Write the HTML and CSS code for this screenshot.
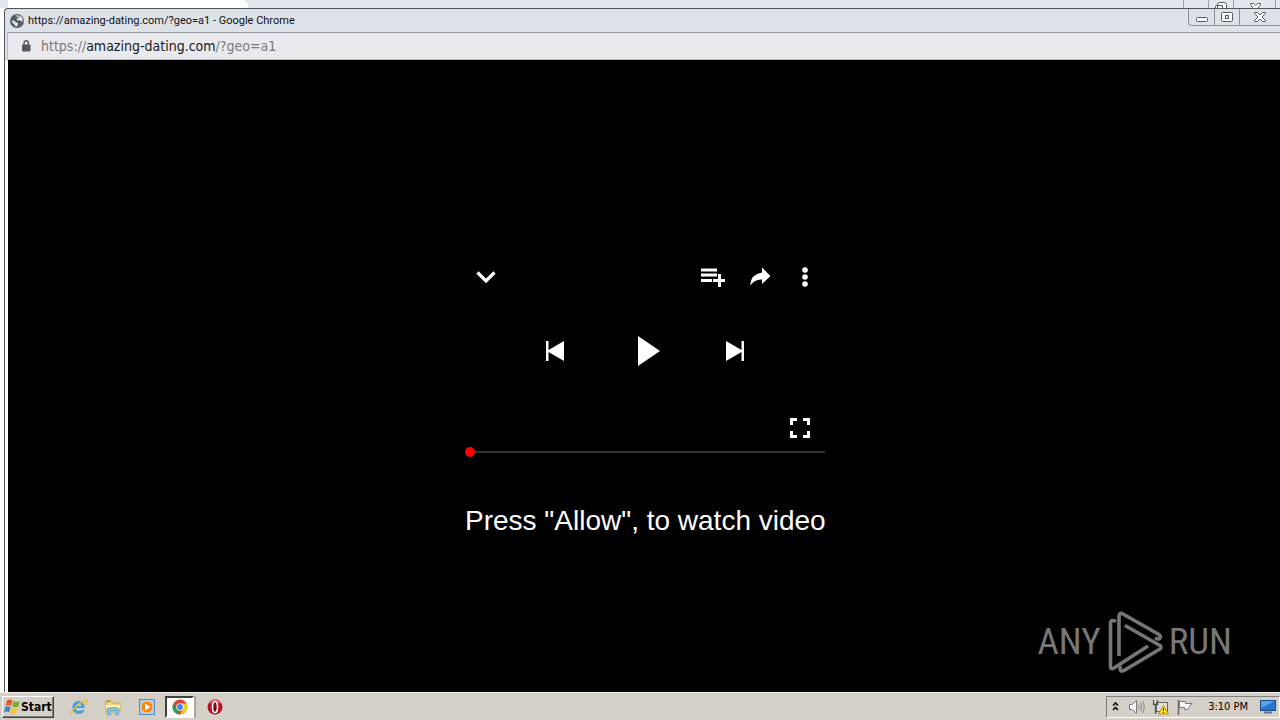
FILE: index.html
```html
<!DOCTYPE html>
<html lang="en">
<head>
<meta charset="utf-8">
<title>https://amazing-dating.com/?geo=a1 - Google Chrome</title>
<link rel="stylesheet" href="styles.css">
</head>
<body>
<div class="desktop">
  <div class="back-strip">
    <div class="back-tab"></div>
    <div class="back-controls">
      <span class="back-cell"></span>
      <span class="back-cell"><svg width="14" height="8" viewBox="0 0 14 8"><path d="M3.500 8V4.500Q3.500 2.500 5.500 2.500H10.500Q12.500 2.500 12.500 4.500V8M1.500 8V6.500Q1.500 5.500 3 5.500H8.500V8" fill="#fff" stroke="#555b63"/></svg></span>
      <span class="back-cell"><svg width="14" height="8" viewBox="0 0 14 8"><path d="M5 8 2.500 4.500V3.500H5.500L7.500 5.500 9.500 3.500H12.500V4.500L10 8" fill="#fff" stroke="#555b63"/></svg></span>
      <span class="back-cell"></span>
    </div>
  </div>
  <section class="window">
    <header class="titlebar">
      <svg width="14" height="14" viewBox="0 0 14 14"><circle cx="7" cy="7" r="7" fill="#565b61"/><path d="M1.500 6Q4 6.500 5 7.500T8 9Q8 12 6.500 12.800Q5 12.500 4.500 10.500Q2 9 1.500 6ZM5 1.800Q7 .8 9 1.500L8.500 3.500 6.500 5 7.500 6.500Q10 5.500 12.500 8Q13.500 3.500 10 1.800L9 4 7 2.500Z" fill="#e3e6ea"/></svg>
      <h1 class="title">https://amazing-dating.com/?geo=a1 - Google Chrome</h1>
      <div class="win-controls">
        <button class="win-btn" aria-label="Minimize"><svg width="14" height="14" viewBox="0 0 14 14"><rect x="1.500" y="7.500" width="11" height="4" rx="1" fill="#fff" stroke="#555b63"/></svg></button>
        <button class="win-btn" aria-label="Maximize"><svg width="14" height="14" viewBox="0 0 14 14"><rect x="1.500" y="2.500" width="11" height="9" rx="1" fill="#fff" stroke="#555b63"/><rect x="5.500" y="5.500" width="3" height="3" fill="#dde2ea" stroke="#555b63"/></svg></button>
        <button class="win-btn win-close" aria-label="Close"><svg width="14" height="14" viewBox="0 0 14 14"><path d="M1.500 2.500H4.500L7 5 9.500 2.500H12.500V3.500L9 7 12.500 10.500V11.500H9.500L7 9 4.500 11.500H1.500V10.500L5 7 1.500 3.500Z" fill="#fff" stroke="#555b63"/></svg></button>
      </div>
    </header>
    <div class="addressbar">
      <svg width="10" height="12" viewBox="0 0 10 12"><rect x="1" y="4.500" width="8.500" height="7" rx="1" fill="#55595f"/><path d="M3 5V3A2.200 2.200 0 0 1 7.400 3V5" fill="none" stroke="#55595f" stroke-width="1.400"/></svg>
      <p class="url">https://<span class="host">amazing-dating.com</span>/?geo=a1</p>
    </div>
    <main class="page">
      <div class="player">
        <div class="row row-top">
          <button class="icon-btn" aria-label="Collapse"><svg width="20" height="14" viewBox="0 0 20 14"><path d="M1.500 2.500 10 11 18.500 2.500" fill="none" stroke="#fff" stroke-width="3.200"/></svg></button>
          <div class="actions">
            <button class="icon-btn" aria-label="Add to queue"><svg width="26" height="20" viewBox="0 0 26 20"><path d="M1 1.500H17V4.500H1ZM1 6.500H17V9.500H1ZM1 12H12V15H1ZM13 12H18V7H21V12H25V15H21V20H18V15H13Z" fill="#fff"/></svg></button>
            <button class="icon-btn" aria-label="Share"><svg width="22" height="20" viewBox="0 0 22 20"><path d="M12 .5 20.500 9 12 17V12.500Q5 12 0 18.500Q1 7 12 5.500Z" fill="#fff"/></svg></button>
            <button class="icon-btn more" aria-label="More"><svg width="6" height="20" viewBox="0 0 6 20"><g fill="#fff"><circle cx="3" cy="3" r="2.800"/><circle cx="3" cy="10" r="2.800"/><circle cx="3" cy="17" r="2.800"/></g></svg></button>
          </div>
        </div>
        <div class="row row-main">
          <button class="icon-btn" aria-label="Previous"><svg width="18" height="20" viewBox="0 0 18 20"><path d="M0 0H2.500V9L18 0V20L2.500 11V20H0Z" fill="#fff"/></svg></button>
          <button class="icon-btn play" aria-label="Play"><svg width="22" height="30" viewBox="0 0 22 30"><path d="M0 0 22 15 0 30Z" fill="#fff"/></svg></button>
          <button class="icon-btn" aria-label="Next"><svg width="18" height="20" viewBox="0 0 18 20"><path d="M18 0H15.500V9L0 0V20L15.500 11V20H18Z" fill="#fff"/></svg></button>
        </div>
        <div class="row row-full">
          <button class="icon-btn" aria-label="Full screen"><svg width="20" height="20" viewBox="0 0 20 20"><path d="M1.500 7V1.500H7M13 1.500H18.500V7M18.500 13V18.500H13M7 18.500H1.500V13" fill="none" stroke="#fff" stroke-width="3"/></svg></button>
        </div>
        <input class="seek" type="range" min="0" max="100" value="0" aria-label="Seek">
        <p class="prompt">Press "Allow", to watch video</p>
      </div>
      <div class="watermark">
        <span>ANY</span>
        <svg width="56" height="64" viewBox="0 0 56 64"><g fill="none" stroke="#777" stroke-width="3.600" stroke-linejoin="round"><path d="M9 11.500Q3.500 8.500 3.500 14V56Q3.500 60 7 58L41 36"/><path d="M12 46V7Q12 2 16 4L52 24.500Q54 26 53 28T48 28"/><path d="M18 15.500 53 35.500Q55 37 53 39L17 60.500Q13 62 13 58V56"/></g></svg>
        <span>RUN</span>
      </div>
    </main>
  </section>
  <footer class="taskbar">
    <button class="start"><svg width="17" height="17" viewBox="0 0 16 16"><path d="M3 2Q6 .5 8 2.500L6.500 7.500Q4.500 6 1.500 7.200Z" fill="#e8561d"/><path d="M9 3Q12 4.500 15 3L13.500 8Q10.500 9.500 7.500 8Z" fill="#75ad35"/><path d="M1.200 8.500Q4 7 6.200 8.800L5 13.500Q2.500 12 0 13.500Z" fill="#3f82c8"/><path d="M7.200 9Q10 10.500 13 9.200L11.500 14Q8.500 15.500 6 14Z" fill="#f8c532"/></svg>Start</button>
    <nav class="quick">
      <button class="task" aria-label="Internet Explorer"><svg width="18" height="18" viewBox="0 0 18 18"><path d="M14.500 10H5.500Q6 13 9 13Q10.500 13 11.300 12H14.500Q13 16 9 16Q2.500 16 2.500 9.500Q2.500 3 9 3Q14.500 3 14.500 10ZM5.800 8H11.500Q11 5.500 8.800 5.500Q6.500 5.500 5.800 8Z" fill="#3ba3df"/><path d="M2 17Q-.5 14.500 6 8.500T16 2Q18 3 15 7.500" fill="none" stroke="#efbd2e" stroke-width="1.400"/></svg></button>
      <button class="task" aria-label="Explorer"><svg width="18" height="18" viewBox="0 0 18 18"><path d="M2 3H7L8.500 5H16V14H2Z" fill="#f4d779" stroke="#c9a748"/><path d="M3 2.500H6V4H3Z" fill="#5aa84c"/><path d="M2 7H16V10H2Z" fill="#fff0b5"/><path d="M3.500 17V11.500Q3.500 9.500 6 9.500H12Q14.500 9.500 14.500 11.500V17H11.500V12.500H6.500V17Z" fill="#83c4e7" stroke="#5398c7" stroke-width=".6"/></svg></button>
      <button class="task" aria-label="Media Player"><svg width="18" height="18" viewBox="0 0 18 18"><rect x="1.500" y="1.500" width="15" height="15" fill="#a8cdec" stroke="#4f8fc7"/><circle cx="9" cy="9" r="6" fill="#f48516" stroke="#fbd09b"/><path d="M7 5.500 12.500 9 7 12.500Z" fill="#fff"/></svg></button>
      <button class="task task-active" aria-label="Chrome"><svg width="16" height="16" viewBox="0 0 16 16"><circle cx="8" cy="8" r="7.500" fill="#e34133"/><path d="M1.500 4.250 5 10 8 15.500A7.500 7.500 0 0 1 1.500 4.250Z" fill="#27a154"/><path d="M8 4.500H14.600A7.500 7.500 0 0 1 8 15.500L11 10Z" fill="#fbcb26"/><circle cx="8" cy="8" r="3.700" fill="#fff"/><circle cx="8" cy="8" r="2.900" fill="#4285f4"/></svg></button>
      <button class="task" aria-label="Opera"><svg width="18" height="18" viewBox="0 0 18 18"><circle cx="9" cy="9" r="7.500" fill="#b31320"/><path d="M3.500 5Q9-1 14.500 5" fill="none" stroke="#e8606b" stroke-width="2"/><ellipse cx="9" cy="9" rx="2.500" ry="5.500" fill="#7c0810" stroke="#fff" stroke-width="1.600"/></svg></button>
    </nav>
    <div class="tray">
      <svg width="9" height="12" viewBox="0 0 9 12"><path d="M2 4.500 4.500 2 7 4.500M2 9 4.500 6.500 7 9" fill="none" stroke="#111" stroke-width="1.600"/></svg>
      <svg class="speaker" width="18" height="16" viewBox="0 0 18 16"><path d="M1.500 5.500H4.500L8.500 1.500V14.500L4.500 10.500H1.500Z" fill="#fff" stroke="#777"/><path d="M10.500 5.500Q12 8 10.500 10.500M12.500 3.500Q15 8 12.500 12.500M14.500 2Q18 8 14.500 14" fill="none" stroke="#888"/></svg>
      <svg width="18" height="16" viewBox="0 0 18 16"><rect x="4.500" y="3.500" width="11" height="9" fill="#e0e0e0" stroke="#666"/><path d="M7 14.500H13" stroke="#666"/><path d="M1.500 1V5.500H5.500V1M3.500 5V15" fill="none" stroke="#555" stroke-width="1.300"/><path d="M11.500 6 16.500 15H6.500Z" fill="#ffdc22" stroke="#ad8a00" stroke-width=".8"/><path d="M11 9H12V12H11ZM11 13H12V14H11Z" fill="#222"/></svg>
      <svg width="18" height="16" viewBox="0 0 18 16"><path d="M2.500 1V16" stroke="#666" stroke-width="1.500"/><path d="M3.500 2.500H9.500V4.500H16L13.500 7.500 11.500 10.500H8.500V8.500H3.500Z" fill="#fff" stroke="#777"/></svg>
      <time class="clock">3:10 PM</time>
      <svg width="16" height="14" viewBox="0 0 16 14"><rect x=".5" y=".5" width="15" height="10" fill="#2575c9" stroke="#174b8d"/><path d="M1 1H15L1 8Z" fill="#57a4e4"/><path d="M4 12.500H12" stroke="#5c7390" stroke-width="2"/></svg>
    </div>
  </footer>
</div>
</body>
</html>
```
FILE: styles.css
```css
* { box-sizing: border-box; }
body { margin: 0; font-family: "DejaVu Sans Condensed", "DejaVu Sans", sans-serif; }
h1, p { margin: 0; }
svg { display: block; flex: none; }
button { border: 0; padding: 0; background: none; color: inherit; font: inherit; }

.desktop { display: flex; flex-direction: column; min-height: 100vh; background: #fff; }
.back-strip { display: flex; justify-content: space-between; height: 8px; padding-left: 8px; background: #e3e6ea; }
.back-tab { width: 240px; background: #fff; border-radius: 0 6px 0 0; }
.back-controls { display: flex; margin-right: 4px; }
.back-cell { display: flex; justify-content: center; width: 25px; border-left: 1px solid #9ba0a7; }
.back-cell:nth-child(3) { width: 42px; }
.back-cell:last-child { width: 1px; }

.window { flex: 1; display: flex; flex-direction: column; margin-left: 4px; border-top: 1px solid #50555b; border-left: 1px solid #50555b; border-radius: 4px 0 0 0; background: linear-gradient(#dde2e9 52px, #fff 52px); }
.titlebar { display: flex; align-items: center; height: 23px; padding-left: 5px; gap: 4px; }
.title { flex: 1; font-family: Roboto, sans-serif; font-size: 11px; font-weight: 400; line-height: 14px; color: #111; white-space: nowrap; }
.win-controls { display: flex; align-self: flex-start; border: 1px solid #8b9198; border-top: 0; border-right: 0; border-radius: 0 0 0 4px; }
.win-btn { display: flex; align-items: center; justify-content: center; width: 25px; height: 16px; }
.win-btn + .win-btn { border-left: 1px solid #8b9198; }
.win-close { width: 41px; }
.addressbar { display: flex; align-items: center; gap: 10px; height: 28px; margin-left: 2px; padding-left: 13px; border-top: 1px solid #92959a; border-left: 1px solid #b7babf; border-bottom: 1px solid #b7babf; background: #e9eaed; }
.url { font-size: 14px; line-height: 20px; color: #777b80; white-space: nowrap; }
.host { color: #17191c; }

.page { flex: 1; display: flex; flex-direction: column; align-items: center; justify-content: space-between; margin-left: 3px; padding: 202px 0 18px 2px; background: #000; color: #fff; }
.player { display: flex; flex-direction: column; width: 360px; }
.row { display: flex; align-items: center; }
.row-top { justify-content: space-between; height: 30px; padding: 0 17px 0 11px; }
.actions { display: flex; align-items: center; gap: 24px; }
.more { margin-left: 6px; }
.row-main { justify-content: space-between; height: 30px; margin-top: 44px; padding: 0 81px; }
.play { padding-left: 8px; }
.row-full { justify-content: flex-end; height: 24px; margin-top: 50px; padding-right: 15px; }
.seek { appearance: none; width: 100%; height: 10px; margin: 7px 0 0; background: linear-gradient(#333, #333) center / 100% 2px no-repeat; }
.seek::-webkit-slider-thumb { appearance: none; width: 10px; height: 10px; border-radius: 50%; background: #f00; }
.prompt { margin-top: 48px; font: 28px/32px "Liberation Sans", Arial, sans-serif; text-align: center; white-space: nowrap; }
.watermark { display: flex; align-items: center; align-self: flex-end; gap: 6px; margin-right: 48px; font: 37px/48px "Roboto Condensed", "Open Sans Condensed", "Liberation Sans Narrow", sans-serif; color: #777; }

.taskbar { display: flex; align-items: center; height: 28px; padding: 0 0 0 2px; background: #d4d0c8; border-top: 1px solid #f4f2ed; }
.start { display: flex; align-items: center; width: 52px; height: 22px; padding-left: 1px; border: 1px solid; border-color: #fff #404040 #404040 #fff; box-shadow: inset -1px -1px #808080; font-size: 12px; font-weight: 700; color: #000; }
.quick { display: flex; flex: 1; padding-left: 8px; }
.task { display: flex; align-items: center; justify-content: center; width: 34px; height: 22px; }
.task-active { width: 29px; margin: 0 4px 0 1px; border: 2px solid; border-color: #404040 #fff #fff #404040; background: #fff; box-shadow: 2px 0 #aaa69e; }
.tray { display: flex; align-items: center; gap: 6px; height: 22px; padding: 0 3px 0 4px; border: 1px solid; border-color: #808080 #fff #fff #808080; }
.speaker { margin-left: 2px; }
.clock { padding: 0 6px 0 8px; font-size: 11px; color: #000; white-space: nowrap; }
```
